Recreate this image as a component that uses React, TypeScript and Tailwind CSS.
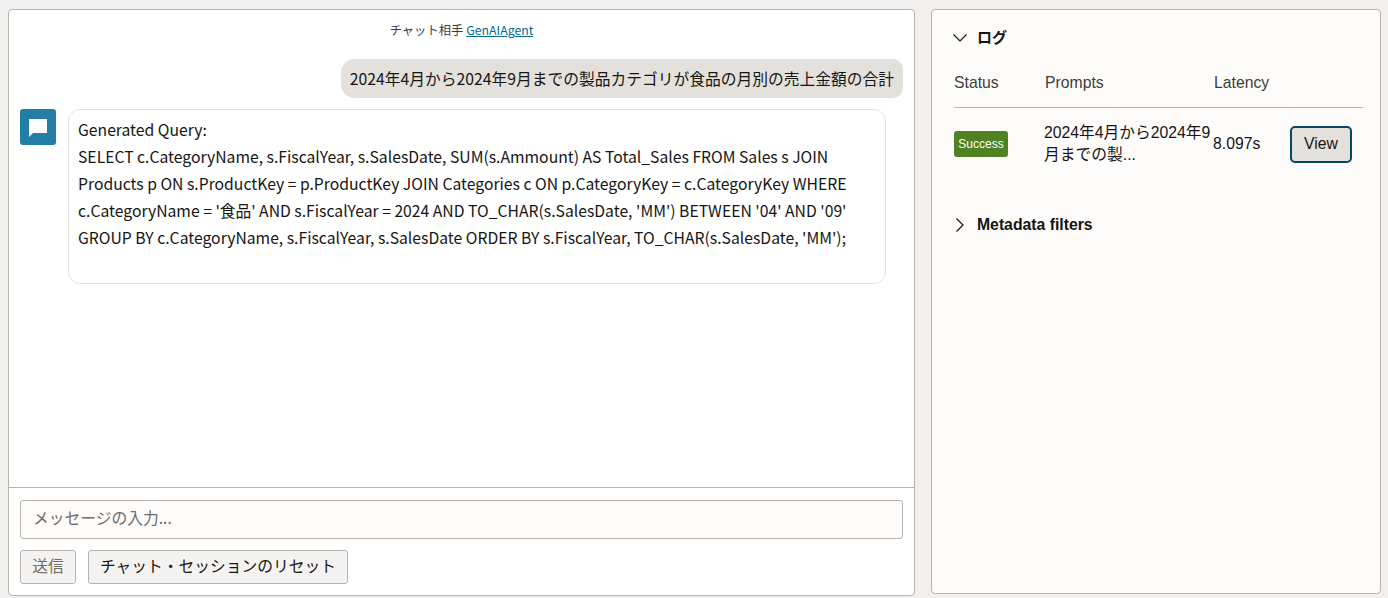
const cjk = "font-['Noto_Sans_CJK_JP','Noto_Sans',sans-serif]";
const arial = "font-['Liberation_Sans','Noto_Sans_CJK_JP',sans-serif]";

function ChevronDownThin() {
  return (
    <svg width="14" height="8" viewBox="0 0 14 8" className="shrink-0 text-[#161513]">
      <path d="M0.5 0.5L7 7L13.5 0.5" fill="none" stroke="currentColor" strokeWidth="1.2" />
    </svg>
  );
}

function ChevronRightThin() {
  return (
    <svg width="14" height="14" viewBox="0 0 14 14" className="shrink-0 text-[#161513]">
      <path d="M3.5 0.5L10 7L3.5 13.5" fill="none" stroke="currentColor" strokeWidth="1.2" />
    </svg>
  );
}

export default function App() {
  return (
    <div className="h-[598px] overflow-hidden bg-[#f1f0ee] flex gap-4 pl-2 pr-[7px] pt-[9px] pb-[2px]">
      {/* Chat */}
      <div className={`w-[907px] h-[587px] flex flex-col bg-white border border-[#b8b3ac] rounded-[4px] ${cjk}`}>
        <div className="h-[477px] px-[11px] flex flex-col">
          <div className="h-[40px] pt-[10px] flex justify-center text-[12.3px] leading-[20px] text-[#3f3c38] gap-[3px]">
            <span>チャット相手</span>
            <a className="text-[#006b8f] underline">GenAIAgent</a>
          </div>
          <div className="flex justify-end pt-[9px] mb-[11px]">
            <div className="h-[39px] flex items-center px-[9px] bg-[#e4e1dc] rounded-l-[14px] rounded-r-[10px] text-[15.75px] text-[#161513]">
              2024年4月から2024年9月までの製品カテゴリが食品の月別の売上金額の合計
            </div>
          </div>
          <div className="flex gap-3 items-start">
            <div className="w-9 h-9 shrink-0 rounded-[3px] bg-[#227ea3] flex items-center justify-center">
              <svg width="18" height="18" viewBox="0 0 18 18" className="mt-[2px]">
                <path d="M0 0h18v14H4L0 18z" fill="#fff" />
              </svg>
            </div>
            <div className="w-[818px] h-[175px] border border-[#e4e1dc] rounded-[12px] px-[9px] pt-[6px] text-[15.73px] leading-[27px] text-[#161513]">
              <div>Generated Query:</div>
              <div>
                SELECT c.CategoryName, s.FiscalYear, s.SalesDate, SUM(s.Ammount) AS Total_Sales FROM Sales s JOIN Products p ON s.ProductKey = p.ProductKey JOIN Categories c ON p.CategoryKey = c.CategoryKey WHERE c.CategoryName = '食品' AND s.FiscalYear = 2024 AND TO_CHAR(s.SalesDate, 'MM') BETWEEN '04' AND '09' GROUP BY c.CategoryName, s.FiscalYear, s.SalesDate ORDER BY s.FiscalYear, TO_CHAR(s.SalesDate, 'MM');
              </div>
            </div>
          </div>
        </div>
        <div className="border-t border-[#b8b3ac] px-[11px] pt-3">
          <input
            readOnly
            placeholder="メッセージの入力..."
            className="w-full h-[39px] pl-[12px] pb-[4px] bg-[#fdfcfa] border border-[#b8b3ac] rounded-[3px] text-[15.75px] outline-none placeholder:text-[#6f6b66]"
          />
          <div className="flex gap-3 mt-[11px]">
            <button className="h-[34px] w-[56px] pb-[2px] bg-[#f5f3f1] border border-[#b8b3ac] rounded-[3px] text-[15.75px] text-[#6f6b66]">送信</button>
            <button className="h-[34px] w-[260px] pb-[2px] bg-[#f5f3f1] border border-[#b8b3ac] rounded-[3px] text-[15.75px] text-[#161513]">チャット・セッションのリセット</button>
          </div>
        </div>
      </div>

      {/* Log */}
      <div className={`w-[450px] h-[585px] bg-[#fdfcfa] border border-[#b8b3ac] rounded-[4px] pl-[22px] pr-[17px] ${arial}`}>
        <div className="h-[54px] flex items-center gap-[10px] pt-[1px] -ml-[1px]">
          <ChevronDownThin />
          <span className={`text-[15px] font-bold text-[#161513] ${cjk}`}>ログ</span>
        </div>
        <div className="h-[45px] pb-[5px] flex items-center border-b border-[#b8b3ac] text-[15.75px] text-[#3f3c38] -mt-[1px]">
          <span className="w-[91px]">Status</span>
          <span className="w-[169px]">Prompts</span>
          <span>Latency</span>
        </div>
        <div className="h-[72px] flex items-center text-[15.75px] text-[#161513]">
          <div className="w-[90px]">
            <span className="inline-flex items-center justify-center w-[54px] h-[26px] rounded-[3px] bg-[#508223] text-white text-[12px]">Success</span>
          </div>
          <div className="w-[169px] leading-[22px]">2024年4月から2024年9月までの製...</div>
          <div className="w-[77px]">8.097s</div>
          <button className="w-[62px] h-[37px] bg-[#e4e1dc] border-[2.5px] border-[#04485f] rounded-[5px] text-[#161513]">View</button>
        </div>
        <div className="mt-[29px] h-[32px] flex items-center gap-[10px] -ml-[1px]">
          <ChevronRightThin />
          <span className="text-[15.75px] font-bold text-[#161513]">Metadata filters</span>
        </div>
      </div>
    </div>
  );
}
